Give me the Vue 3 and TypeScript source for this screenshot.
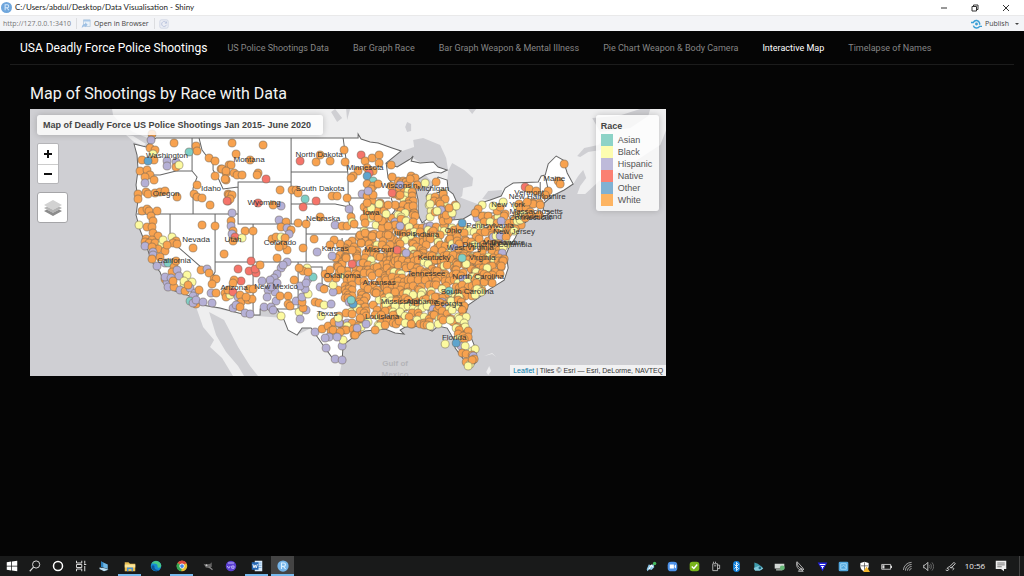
<script setup lang="ts">
type Race = 'A' | 'B' | 'H' | 'N' | 'O' | 'W'

interface Dot {
  x: number
  y: number
  race: Race
}

interface Label {
  name: string
  x: number
  y: number
}

const navItems: string[] = [
  'US Police Shootings Data',
  'Bar Graph Race',
  'Bar Graph Weapon & Mental Illness',
  'Pie Chart Weapon & Body Camera',
  'Interactive Map',
  'Timelapse of Names',
]
const activeItem = 'Interactive Map'

const races: { key: Race; name: string }[] = [
  { key: 'A', name: 'Asian' },
  { key: 'B', name: 'Black' },
  { key: 'H', name: 'Hispanic' },
  { key: 'N', name: 'Native' },
  { key: 'O', name: 'Other' },
  { key: 'W', name: 'White' },
]

// Hand-placed markers: "race x,y" separated by spaces.
const placed = `
W152,134 H151,140 W174,143 W196,146 W197,151 A189,152 W150,148 W155,150 B153,154 W142,160 W154,160 O148,161
H167,161 H167,166 H176,162 W176,167 B179,165 W140,171 W147,170 W150,175 W145,177 W154,180 H145,183
W138,194 W138,199 W146,192 W148,194 W155,193 W160,192 W165,191 W177,197 W197,185 W194,194 W197,197 W202,198 W210,205
W209,158 W215,161 W221,169 W226,173 W229,165 W215,176 W226,180 N228,201 W228,194
W142,211 W147,209 W149,211 W157,211 W151,216 W153,221 B139,225 W147,227 W152,227 W153,233 W158,236 W146,239 W152,240 B172,237 W176,241 W202,225 W215,226
W232,143 W263,145 W236,154 W250,160 W231,165 W222,169 W226,171 W225,179 W234,173 W237,175 W242,175 W258,173 W257,175 N266,179 W280,190
N300,161 W316,162 W320,155 W330,161 W344,150 W345,162 N361,155 W365,161 W372,158 W379,155 W379,163 W367,168 W373,171 N369,173 O367,176 A373,181 W358,171 W353,176 W351,178 W367,184 W373,186 W371,189 W378,184 H362,194 W367,196 W373,195 H368,191
W391,165 W392,177 W391,186 N392,193 H400,185 W400,195
W292,190 W296,190 W298,193 A305,199 N316,201 N303,207 W332,196 W337,196 W347,198 H349,209 W320,217 H335,225 W342,226 W347,226 W351,217 B352,222 W354,224
W229,195 W232,195 W230,199 N227,201 N258,203 W273,205 H281,206 H232,213 W231,221 H231,226 W233,231 H232,234 W245,231 W253,231 N235,237 W233,241 B242,238
H279,220 W286,222 W281,227 H287,228 W291,230 H289,234 W298,223 W306,224 W314,239 W272,239 W276,237 B281,237 W285,238
W364,207 W367,211 W364,218 W365,223 W373,216 B379,204 B371,208 B386,214 W388,205 W382,221 W388,226 W388,235 W360,235 W365,233 W372,236 H400,226 W378,218 W367,203
W145,242 W149,243 W155,243 B162,244 W173,243 W177,244 H145,246 W158,249 W165,251 W152,247 H153,252 H153,255 W152,259 H157,266 H165,263 A168,263 W160,257 B163,240 W167,245 W174,267 W176,261 W172,272 H177,270 H179,276 B187,275 B192,282 B184,284 W165,279 H167,282 H165,277 H168,287 W174,287 H180,290 B184,281 W185,291 H190,288 W188,285 H195,293 W199,290 H193,296 A190,301 W196,304 H193,303 H196,300 H203,302 H212,303 W201,270 H207,269 W209,273 W214,279 W216,279 W212,284 H211,293 W216,293 W193,248 W224,254 H171,278 W173,281
N238,269 N251,261 N249,271 N256,273 N255,269 N241,281 W260,265 W277,258 H287,262 W287,250 W283,245 W279,247 W303,248 H317,252 H332,256 H281,268 H283,265 H277,274 H274,278 H271,283 H270,280 H262,281 H277,283 H275,292 H268,290 H271,287
W234,280 W233,283 W225,293 W226,297 B230,295 W228,290 N233,292 H238,297 W240,295 W241,302 H233,308 H236,305 W240,307 H245,313 H250,314 W248,300 W252,299 W249,289 W253,289 W246,297 H267,297 H276,301 H264,307 H271,307 H273,310 B281,316 W280,296 W288,296 W288,304 W290,306 W294,280 H296,301 B299,312 H300,319 H306,310 W303,308 W302,302 H302,297 B308,294 H305,289 H300,286 H308,279 A313,277 B307,268 W303,271 W308,272 W299,268 H306,283 H320,287 W324,289 H333,292 W315,302 W319,303 B324,305 H331,304 B321,316 B333,285
H315,332 W322,329 W328,326 W331,331 W333,330 H329,337 W334,322 H339,323 W340,332 B338,318 H326,348 H335,359 H342,360 H342,346 B343,340 H337,337 H325,338
W325,274 W330,270 W336,278 W341,270 W346,258 W352,250 W340,244 W334,240 W330,245 W328,278
W410,179 W436,182 B425,183 W443,194 W445,199 W440,204 H441,210 B430,204 B437,211 W446,215 B452,213 B456,206 W449,208
B482,205 W478,209 W475,213 W497,211 W500,207 B503,202 B493,206 N525,187 W529,189 W536,191 W548,191 W539,203 W545,195 W564,164 W558,181 W560,184 W533,204 W527,202 W540,205
N352,264 O353,304 A351,300 O462,223 B466,264 A462,258 O456,343 A449,291 B445,344 H406,253 H357,328 N397,250 W375,330 W411,324 W472,360 B468,366`

const dots: Dot[] = placed
  .trim()
  .split(/\s+/)
  .map((entry) => {
    const [x, y] = entry.slice(1).split(',').map(Number)
    return { x, y, race: entry[0] as Race }
  })

// Seeded generator, so the crowded regions look the same on every load.
let seed = 20157
function random(): number {
  seed = (seed * 16807) % 2147483647
  return seed / 2147483647
}

type Ring = [number, number][]

function inside(px: number, py: number, ring: Ring): boolean {
  let hit = false
  for (let i = 0, j = ring.length - 1; i < ring.length; j = i++) {
    const [xi, yi] = ring[i]
    const [xj, yj] = ring[j]
    if (yi > py !== yj > py && px < ((xj - xi) * (py - yi)) / (yj - yi) + xi) hit = !hit
  }
  return hit
}

function scatter(ring: Ring, step: number, keep: number, black: number, hispanic: number): Dot[] {
  const found: Dot[] = []
  const xs = ring.map((p) => p[0])
  const ys = ring.map((p) => p[1])
  for (let y = Math.min(...ys); y < Math.max(...ys); y += step) {
    for (let x = Math.min(...xs); x < Math.max(...xs); x += step) {
      const px = Math.round(x + random() * step)
      const py = Math.round(y + random() * step)
      const pick = random()
      if (random() > keep || !inside(px, py, ring)) continue
      const race: Race = pick < black ? 'B' : pick < black + hispanic ? 'H' : 'W'
      found.push({ x: px, y: py, race })
    }
  }
  return found
}

const crowded: Dot[] = [
  ...scatter([[394, 172], [418, 176], [416, 196], [418, 212], [404, 212], [392, 202]], 5, 0.8, 0.15, 0.05),
  ...scatter([[370, 200], [396, 206], [392, 234], [360, 234]], 7, 0.5, 0.35, 0.05),
  ...scatter([[392, 204], [418, 206], [421, 224], [456, 222], [452, 262], [395, 256], [388, 232]], 5, 0.85, 0.25, 0.04),
  ...scatter([[426, 196], [444, 188], [458, 204], [450, 222], [426, 222]], 6, 0.75, 0.4, 0.06),
  ...scatter([[336, 258], [350, 238], [365, 232], [392, 234], [398, 262], [392, 302], [348, 302], [338, 290]], 5, 0.8, 0.1, 0.03),
  ...scatter([[448, 228], [470, 221], [488, 211], [505, 212], [525, 215], [532, 218], [516, 230], [508, 244], [506, 258], [450, 266]], 5, 0.82, 0.24, 0.05),
  ...scatter([[513, 202], [544, 202], [545, 212], [532, 220], [508, 222]], 5, 0.7, 0.25, 0.1),
  ...scatter([[393, 254], [450, 254], [508, 258], [504, 277], [486, 290], [468, 302], [448, 308], [386, 308]], 5, 0.92, 0.13, 0.02),
  ...scatter([[343, 298], [362, 298], [374, 302], [378, 320], [362, 332], [350, 338], [332, 328], [330, 320], [346, 312]], 5, 0.85, 0.15, 0.08),
  ...scatter([[376, 290], [468, 296], [466, 318], [440, 327], [406, 327], [374, 326]], 5, 0.85, 0.38, 0.02),
  ...scatter([[488, 262], [508, 258], [508, 268], [498, 282], [476, 298], [466, 300]], 6, 0.6, 0.55, 0.02),
  ...scatter([[448, 320], [464, 318], [470, 334], [478, 350], [476, 366], [466, 364], [456, 346]], 5, 0.9, 0.25, 0.1),
]

const allDots: Dot[] = [...crowded, ...dots]

const labels: Label[] = [
  ['Washington', 167, 155], ['Oregon', 166, 193], ['California', 174, 260], ['Nevada', 196, 239],
  ['Idaho', 211, 188], ['Montana', 249, 159], ['Wyoming', 264, 202], ['Utah', 233, 239],
  ['Colorado', 280, 242], ['Arizona', 234, 287], ['New Mexico', 276, 286], ['North Dakota', 319, 154],
  ['South Dakota', 320, 188], ['Nebraska', 323, 218], ['Kansas', 335, 248], ['Oklahoma', 342, 275],
  ['Texas', 327, 313], ['Minnesota', 365, 167], ['Iowa', 371, 212], ['Missouri', 379, 249],
  ['Arkansas', 379, 282], ['Louisiana', 382, 316], ['Wisconsin', 399, 185], ['Illinois', 405, 233],
  ['Michigan', 433, 188], ['Indiana', 426, 234], ['Ohio', 453, 230], ['Kentucky', 434, 257],
  ['Tennessee', 426, 273], ['Mississippi', 400, 301], ['Alabama', 422, 301], ['Georgia', 448, 303],
  ['Florida', 454, 337], ['South Carolina', 467, 291], ['North Carolina', 478, 276], ['Virginia', 482, 257],
  ['West Virginia', 470, 247], ['Pennsylvania', 490, 225], ['New York', 508, 204], ['New Jersey', 514, 231],
  ['Maryland', 499, 242], ['District of Columbia', 497, 244], ['Delaware', 508, 242], ['Connecticut', 530, 217],
  ['Rhode Island', 538, 216], ['Massachusetts', 536, 211], ['New Hampshire', 537, 196], ['Vermont', 529, 192],
  ['Maine', 554, 178],
].map(([name, x, y]) => ({ name, x, y }) as Label)

const landPaths: string[] = [
  'M112 109L113 115L121 124L133 132L150 139L344 139L400 150L440 190L480 205L541 183L573 184L578 176L583 170L586 178L580 186L577 194L585 194L600 180L612 175L640 158L660 145L666 130V109Z',
  'M126 135L133 136L146 144L143 146L134 142Z',
  'M195 304L210 307L246 315L284 318L297 335L311 328L325 348L342 361L339 376H258L250 366L238 347L224 320L209 312L216 335L226 352L238 366L244 376H233L222 358L210 347L214 340L203 327Z',
  'M484 356L492 353L496 357L493 362L496 357L492 354Z',
  'M489 366L491 371L488 375L486 372Z',
]

const lakePaths: string[] = [
  'M386 163L402 151L414 147L413 140L423 138L440 145L446 158L448 171L440 168L433 163L421 163L411 157L397 167Z',
  'M448 171L452 163L464 170L473 178L472 186L463 188L462 196L455 202L449 190L447 181Z',
  'M452 219L458 210L468 206L480 205L482 208L470 216L460 221Z',
  'M482 199L488 191L502 190L501 196L490 200Z',
  'M335 109L342 118L337 122L331 112ZM346 109L350 109L347 120Z',
  'M407 122L411 124L411 131L407 132L405 127Z',
  'M468 109L476 109L472 114ZM577 156L584 148L598 145L606 137L600 150L588 152L580 157Z',
  'M592 118L618 116L640 109L650 109L648 116L630 128L600 132Z',
]

const usPath =
  'M134 144L146 147L150 142L156 138H344L358 138V134L361 139L370 142L378 143L392 148L401 151L386 163L397 167L410 159L413 156L411 161L420 163L433 162L438 167L447 170L441 173L434 172L425 175L417 180L415 187L418 200L418 215L422 223L428 218L430 207L426 196L432 186L438 177L447 180L448 190L453 194L457 203L451 212L452 220L463 219L475 212L482 207L480 203L490 200L501 196L505 188L513 183L538 182L541 176L545 175L548 164L556 156L563 160L567 173L573 184L564 190L552 196L544 203L543 210L550 212L548 215L530 218L520 227L515 238L509 247L506 254L508 268L504 280L488 290L478 298L468 305L465 315L468 330L476 350L476 362L470 368L464 360L455 348L453 338L447 328L438 326L432 331L422 326L405 327L400 330L404 334L395 333L385 329L365 331L352 338L343 345L342 360L333 359L325 348L318 338L311 328L302 328L297 335L288 330L284 320L277 309H260V315H246L220 308L196 304L190 296L175 291L165 285L160 272L152 262L146 245L140 230L136 215L138 200L136 185L138 170L137 155Z'

const statePath =
  'M152 175L160 175L176 171L192 171V138M192 171L197 177L193 188V214M137 214H238M199 138L202 150L208 158L213 164L213 170L219 180L223 189L238 187M238 182H291V224H238ZM291 138V182M291 172H347M291 204H335L349 207M343 138L346 160L348 175V200L352 212L357 228M291 224H306V262M306 234H358M253 224V315M215 214V272L212 277M170 214V240L209 274M215 262H342M298 262V309M260 309H298M298 267H322V284L333 288L346 291M348 198H390M357 228H386M391 198L395 210L386 222L390 234L398 246L395 258L385 275L378 290V304M342 238V262L346 268V292L352 304H378M346 268H388M540 182V205M545 176L550 198M475 213H505M391 228H418M424 222V250M448 222V240M395 264H500M404 268V325M428 268V320M386 163L388 178L402 196M480 262L506 263'

const pinned: string[] = [
  '<path d="M1 3l6-1v5.5H1zM8 2l7-1v6.500H8zM1 8.500h6V14l-6-1zM8 8.500h7V15l-7-1z" fill="#fff"/>',
  '<circle cx="9.500" cy="6" r="4.800" fill="none" stroke="#ddd" stroke-width="1.300"/><path d="M6 9.500L1 15" stroke="#ddd" stroke-width="1.500"/>',
  '<circle cx="8" cy="8" r="6" fill="none" stroke="#fff" stroke-width="2"/>',
  '<path d="M2 1v3h7V1M2 15v-3h7v3M2 6h7v4H2zM13 1v4M13 8v7M12 6h3" fill="none" stroke="#ddd" stroke-width="1.300"/>',
  '<path d="M4 2l9 4v6l-9-3z" fill="#6fb7e6"/><path d="M2 10l7 1 5 2-6 2-6-3z" fill="#b9dcf1"/><path d="M4 2l3 1v7l-3-1z" fill="#2c80bd"/>',
  '<path d="M1 3h5l2 2h7v10H1z" fill="#e8bd51"/><path d="M1 6h14v4H1z" fill="#fbe59b"/><path d="M4 15v-5h8v5h-2v-3H6v3z" fill="#4a91d0"/>',
  '<circle cx="8" cy="8" r="7" fill="#168bd2"/><path d="M2 5C5-1 14 1 15 7c0 4-5 4-5 2 1-4-4-5-8-4z" fill="#48c987"/><path d="M6 8c-1 4 3 6 7 5-4 4-10 1-11-3 0-3 2-4 4-2z" fill="#0d579b"/>',
  '<circle cx="8" cy="8" r="7" fill="#e8bf35"/><path d="M8 8L2 4a7 7 0 0 1 12 0z" fill="#dc4a3f"/><path d="M8 8L2 4a7 7 0 0 0 5 11z" fill="#35a653"/><circle cx="8" cy="8" r="3.400" fill="#fff"/><circle cx="8" cy="8" r="2.500" fill="#4687e8"/>',
  '<path d="M2 5l4 1 5-1 2-2v6l-3 2-5-1z" fill="#666"/><circle cx="6" cy="7" r="1.300" fill="#ccc"/><path d="M9 9l5 4" stroke="#888" stroke-width="1.500"/>',
  '<circle cx="8" cy="8" r="7" fill="#5b3fd0"/><path d="M4 4h8M3 8l2 3 2-3M9 8h3v3H9z" fill="none" stroke="#bfb5fa" stroke-width="1.300"/>',
  '<path d="M5 1h10v14H5z" fill="#d9eafa"/><path d="M7 4h7M7 7h7M7 10h7" stroke="#62a0dc"/><path d="M1 3h9v10H1z" fill="#2467b4"/><path d="M2.500 5.500L4 10.500l1.500-4 1.500 4 1.500-5" fill="none" stroke="#fff" stroke-width="1.200"/>',
  '<circle cx="8" cy="8" r="7.500" fill="#75b5e9"/><path d="M6 12V4h3a2 2 0 0 1 0 4.500H6M8.500 8.500l3 3.500" fill="none" stroke="#d8efff" stroke-width="1.500"/>',
]
const openApps: number[] = [5, 7, 10, 11]

const tray: string[] = [
  '<path d="M1 12l3-7 4 1 3-2 1 5-4 4-3-1-3 3z" fill="#8fc8e8"/><path d="M4 12l4-6 2 3" stroke="#fff" stroke-width="1.500" fill="none"/><circle cx="12.500" cy="3.500" r="2.500" fill="#42b85c"/>',
  '<rect x="1" y="1" width="14" height="14" rx="5" fill="#4c91e9"/><path d="M4 5h6v6H4zM11 7l2-2v6l-2-2z" fill="#fff"/>',
  '<rect x="1" y="1" width="14" height="14" rx="4" fill="#79b51c"/><path d="M4 8l3 3 5-6" fill="none" stroke="#fff" stroke-width="2"/>',
  '<path d="M4 4h7v10H4zM11 6h3v5h-3M5 1v2M8 1v2M6 7h3" fill="none" stroke="#ccc" stroke-width="1.200"/>',
  '<rect x="3" y="0" width="10" height="16" rx="5" fill="#1683dc"/><path d="M5 5l6 6-3 3V2l3 3-6 6" fill="none" stroke="#fff" stroke-width="1.200"/>',
  '<path d="M2 2l5 2 7 5-2 4H2z" fill="#3f9cad"/><path d="M1 10l8-3 6 4-5 3H3z" fill="#82cadb"/><circle cx="10" cy="10" r="2" fill="#246b85"/>',
  '<path d="M1 4h14v7H1z" fill="#d2d7d4"/><path d="M3 11h9v3H3z" fill="#8e9991"/><circle cx="12" cy="10" r="3.500" fill="#65b877"/>',
  '<path d="M3 1c0 6 3 10 10 11C8 16 0 10 3 1zM4 2l8 9M8 11l4 4H5z" fill="none" stroke="#ccc" stroke-width="1.200"/>',
  '<path d="M1 2h14l-7 13z" fill="#2020df"/><path d="M4 5h8M6 8h4M8 8v3" stroke="#fff" stroke-width="1.500"/>',
  '<rect x="1" y="1" width="14" height="14" rx="2" fill="#51a6dc"/><path d="M4 4h8v8H4zM5 9l3-3 4 4" fill="none" stroke="#a9ddfb" stroke-width="1.300"/>',
  '<path d="M8 1l6 2v5c0 4-3 6-6 7-3-1-6-3-6-7V3z" fill="#fff"/><path d="M8 2v12M3 7h10" stroke="#444"/><path d="M11 8l5 8H6z" fill="#f4b72b"/>',
  '<path d="M1 5h13v7H1z" fill="none" stroke="#ddd" stroke-width="1.200"/><path d="M2 6h3v5H2zM14 7h2v3h-2z" fill="#ddd"/>',
  '<path d="M2 13A12 12 0 0 1 14 2M5 14a9 9 0 0 1 9-9M8 14a6 6 0 0 1 6-6M11 14a3 3 0 0 1 3-3" fill="none" stroke="#bbb" stroke-width="1.200"/>',
  '<path d="M1 6h2l4-4v12l-4-4H1z" fill="none" stroke="#ddd" stroke-width="1.200"/><path d="M9 6q2 2 0 4M11 4q3 4 0 8M13 2q5 6 0 12" fill="none" stroke="#888"/>',
  '<path d="M1 13c4 3 6-2 3-2-4 0 4-3 5-5l4-4 2 2-5 5-3 1M9 10c4-1 5 2 2 3" fill="none" stroke="#ddd" stroke-width="1.300"/>',
]
</script>

<template>
  <div class="window">
    <header class="titlebar">
      <svg class="r-logo" viewBox="0 0 16 16" aria-hidden="true">
        <circle cx="8" cy="8" r="8" fill="#6fa6dc" />
        <path d="M6 12V4h3a2 2 0 0 1 0 4.500H6M8.500 8.500l3 3.500" fill="none" stroke="#d5e8fa" stroke-width="1.500" />
      </svg>
      <span class="window-title">C:/Users/abdul/Desktop/Data Visualisation - Shiny</span>
      <div class="window-buttons">
        <button type="button" aria-label="Minimise">
          <svg viewBox="0 0 8 8"><path d="M1 4h6" /></svg>
        </button>
        <button type="button" aria-label="Restore">
          <svg viewBox="0 0 8 8"><path d="M1 2.500h4.500V7H1zM2.500 2.500V1H7v4.500H5.500" /></svg>
        </button>
        <button type="button" aria-label="Close">
          <svg viewBox="0 0 8 8"><path d="M1 1l6 6M7 1L1 7" /></svg>
        </button>
      </div>
    </header>

    <div class="toolbar">
      <span class="address">http://127.0.0.1:3410</span>
      <button type="button" class="tool open">
        <svg viewBox="0 0 12 12" aria-hidden="true">
          <path d="M3 1h8v8H3z" fill="#e9f1f9" stroke="#b7cbe0" />
          <path d="M3 1h8v2H3z" fill="#a9c8e8" />
          <path d="M1 11c0-4 2-5 4-5V4l3 3-3 3V8c-2 0-3 1-4 3z" fill="#9cbfe4" />
        </svg>
        Open in Browser
      </button>
      <button type="button" class="tool reload" aria-label="Reload">
        <svg viewBox="0 0 12 12">
          <rect x="1" y="1" width="10" height="10" rx="2" fill="#eceef5" stroke="#cdd2e2" />
          <path d="M9 5a3 3 0 1 0 0 2M9 3v2H7" fill="none" stroke="#b5bfda" />
        </svg>
      </button>
      <button type="button" class="tool publish">
        <svg viewBox="0 0 14 12" aria-hidden="true">
          <path d="M0 4h3c2-4 7-3 8 1v2M14 9h-3c-2 3-7 3-8-1" fill="none" stroke="#3a9fd6" stroke-width="1.800" />
          <circle cx="7" cy="6" r="1.800" fill="#3a9fd6" />
        </svg>
        Publish
        <span class="caret"></span>
      </button>
    </div>

    <nav class="navbar">
      <a href="#" class="brand">USA Deadly Force Police Shootings</a>
      <div class="nav-links">
        <a v-for="item in navItems" :key="item" href="#" class="nav-link" :class="{ active: item === activeItem }">{{ item }}</a>
      </div>
    </nav>

    <main class="content">
      <h1>Map of Shootings by Race with Data</h1>
      <section class="map" aria-label="Map of shootings">
        <svg class="map-canvas" viewBox="30 109 636 267" preserveAspectRatio="xMidYMid slice">
          <rect class="ocean" x="30" y="109" width="636" height="267" />
          <path v-for="d in landPaths" :key="d" class="land" :d="d" />
          <path v-for="d in lakePaths" :key="d" class="lake" :d="d" />
          <path class="country" :d="usPath" />
          <path class="states" :d="statePath" />
          <text class="sea" x="395" y="366">Gulf of</text>
          <text class="sea" x="395" y="377">Mexico</text>
          <circle v-for="(dot, i) in allDots" :key="i" class="dot" :class="'race-' + dot.race" :cx="dot.x" :cy="dot.y" r="4" />
          <text v-for="label in labels" :key="label.name" class="state-name" :x="label.x" :y="label.y + 3">{{ label.name }}</text>
        </svg>

        <h2 class="map-title">Map of Deadly Force US Police Shootings Jan 2015- June 2020</h2>
        <div class="zoom">
          <button type="button" aria-label="Zoom in"><svg viewBox="0 0 10 10"><path d="M1 5h8M5 1v8" /></svg></button>
          <button type="button" aria-label="Zoom out"><svg viewBox="0 0 10 10"><path d="M1 5h8" /></svg></button>
        </div>
        <button type="button" class="layers" aria-label="Layers">
          <svg viewBox="0 0 20 20">
            <path d="M1 13l9 5 9-5-3-1.500-6 3-6-3z" fill="#8c8c8c" />
            <path d="M1 10l9 5 9-5-3-1.500-6 3-6-3z" fill="#b4b4b4" />
            <path d="M1 7l9-5 9 5-9 5z" fill="#d2d2d2" />
          </svg>
        </button>
        <div class="legend">
          <strong>Race</strong>
          <ul>
            <li v-for="race in races" :key="race.key"><i :class="'race-' + race.key"></i>{{ race.name }}</li>
          </ul>
        </div>
        <p class="attribution"><a href="#">Leaflet</a> | Tiles © Esri — Esri, DeLorme, NAVTEQ</p>
      </section>
    </main>

    <footer class="taskbar">
      <div class="pinned">
        <button v-for="(icon, i) in pinned" :key="i" type="button" :class="{ open: openApps.includes(i), current: i === 11 }" :aria-label="'App ' + (i + 1)">
          <svg viewBox="0 0 16 16" v-html="icon"></svg>
        </button>
      </div>
      <div class="tray">
        <button v-for="(icon, i) in tray" :key="i" type="button" :aria-label="'Status ' + (i + 1)">
          <svg viewBox="0 0 16 16" v-html="icon"></svg>
        </button>
      </div>
      <time class="clock">10:56</time>
      <button type="button" class="notices" aria-label="Notifications">
        <svg viewBox="0 0 16 16">
          <path d="M1 1h14v11h-3v3l-4-3H1z" fill="#eee" />
          <path d="M3 4h10M3 6.500h10M3 9h6" stroke="#555" />
        </svg>
      </button>
      <span class="desktop-edge"></span>
    </footer>
  </div>
</template>

<style>
body {
  margin: 0;
  background: #050505;
}
</style>

<style scoped>
.window {
  display: flex;
  flex-direction: column;
  min-height: 100vh;
  background: #050505;
  font-family: Roboto, "Liberation Sans", sans-serif;
}
button {
  margin: 0;
  padding: 0;
  border: 0;
  background: none;
  font: inherit;
  color: inherit;
}
svg {
  display: block;
}
a {
  text-decoration: none;
}
.titlebar {
  display: flex;
  align-items: center;
  height: 15px;
  padding-left: 1px;
  background: #fff;
  border-bottom: 1px solid #e9e9ea;
}
.r-logo {
  width: 11px;
  height: 11px;
}
.window-title {
  margin-left: 3px;
  font: 8px/15px Lato, "Open Sans", sans-serif;
  color: #222;
}
.window-buttons {
  display: flex;
  gap: 23px;
  margin-left: auto;
  padding-right: 14px;
}
.window-buttons svg {
  width: 8px;
  height: 8px;
  fill: none;
  stroke: #333;
  stroke-width: 1;
}
.toolbar {
  display: flex;
  align-items: center;
  height: 15px;
  padding: 0 5px 0 3px;
  background: #f3f4f7;
  font: 7px/15px "Open Sans", "Noto Sans", sans-serif;
  color: #444;
}
.address {
  color: #777;
}
.tool {
  display: flex;
  align-items: center;
  gap: 3px;
  height: 11px;
}
.tool svg {
  width: 10px;
  height: 10px;
}
.open.tool,
.reload {
  margin-left: 5px;
  padding-left: 4px;
  border-left: 1px solid #dcdde0;
}
.publish {
  margin-left: auto;
}
.publish svg {
  width: 11px;
}
.caret {
  margin-left: 3px;
  border: 2px solid transparent;
  border-top-color: #444;
  border-bottom: 0;
}
.navbar {
  display: flex;
  align-items: center;
  gap: 20px;
  height: 33px;
  margin: 0 10px;
  padding: 0 10px;
  border-bottom: 1px solid #1c1c1c;
  white-space: nowrap;
}
.brand {
  font-size: 12px;
  color: #fff;
}
.nav-links {
  display: flex;
  gap: 24px;
}
.nav-link {
  font-size: 9px;
  color: #858585;
}
.nav-link.active {
  color: #fff;
}
.content {
  flex: 1;
  padding: 19px 30px 20px;
}
h1 {
  margin: 0 0 5px;
  font-size: 16px;
  font-weight: 400;
  line-height: 20px;
  color: #f4f4f4;
}
.map {
  position: relative;
  width: 66%;
  aspect-ratio: 636 / 267;
  overflow: hidden;
  font-family: "Liberation Sans", Arial, sans-serif;
}
.map-canvas {
  width: 100%;
  height: 100%;
}
.ocean,
.lake {
  fill: #cfcfd3;
}
.land {
  fill: #eeeeef;
}
.country {
  fill: #fff;
  stroke: #666;
  stroke-width: 1;
}
.states {
  fill: none;
  stroke: #666;
  stroke-width: 1;
}
.sea {
  font-size: 8px;
  font-weight: 700;
  fill: #b4b4b8;
  text-anchor: middle;
}
.dot {
  stroke: #6d6252;
  stroke-opacity: 0.5;
  stroke-width: 1;
}
.race-A {
  fill: #7fcfc6;
  background: #8dd3c7;
}
.race-B {
  fill: #fcfaa0;
  background: #fdfdb0;
}
.race-H {
  fill: #b5b0d6;
  background: #bebada;
}
.race-N {
  fill: #f5746a;
  background: #fb8072;
}
.race-O {
  fill: #5fa4cd;
  background: #80b1d3;
}
.race-W {
  fill: #f8a24f;
  background: #fdb462;
}
.state-name {
  font-size: 8px;
  fill: #333;
  text-anchor: middle;
}
.map-title,
.legend {
  position: absolute;
  top: 6px;
  margin: 0;
  background: rgba(255, 255, 255, 0.8);
  border-radius: 3px;
  box-shadow: 0 0 6px rgba(0, 0, 0, 0.2);
  color: #555;
}
.map-title {
  left: 7px;
  padding: 0 12px 0 6px;
  font-size: 9px;
  line-height: 20px;
  color: #444;
}
.zoom {
  position: absolute;
  top: 34px;
  left: 7px;
  border: 1px solid #b5b5b8;
  border-radius: 2px;
  background: #fff;
}
.zoom button {
  display: grid;
  place-items: center;
  width: 20px;
  height: 20px;
}
.zoom button + button {
  height: 19px;
  border-top: 1px solid #ccc;
}
.zoom svg {
  width: 10px;
  height: 10px;
  stroke: #111;
  stroke-width: 2;
}
.layers {
  position: absolute;
  top: 83px;
  left: 7px;
  display: grid;
  place-items: center;
  width: 31px;
  height: 31px;
  border: 1px solid #a5a5a8;
  border-radius: 3px;
  background: #fff;
}
.layers svg {
  width: 20px;
  height: 20px;
}
.legend {
  right: 7px;
  padding: 5px 7px 5px 5px;
  font-size: 9px;
  line-height: 12px;
}
.legend strong {
  color: #444;
}
.legend ul {
  margin: 2px 0 0;
  padding: 0;
  list-style: none;
}
.legend li {
  display: flex;
  gap: 5px;
}
.legend i {
  width: 12px;
  height: 12px;
}
.attribution {
  position: absolute;
  right: 0;
  bottom: 0;
  margin: 0;
  padding: 0 3px;
  font-size: 7px;
  line-height: 11px;
  color: #333;
  background: rgba(255, 255, 255, 0.7);
}
.attribution a {
  color: #0078a8;
}
.taskbar {
  display: flex;
  align-items: stretch;
  height: 20px;
  background: #191a1a;
  color: #eee;
}
.pinned,
.tray {
  display: flex;
}
.pinned {
  flex: 0 0 294px;
}
.tray {
  flex: 0 0 320px;
  margin-left: auto;
}
.pinned button,
.tray button,
.notices {
  display: grid;
  place-items: center;
  flex: 1;
}
.pinned .open {
  margin: 0 3px;
  border-bottom: 2px solid #76b9ed;
  padding-top: 2px;
}
.pinned .current {
  margin: 0;
  background: #444;
}
.taskbar svg {
  width: 12px;
  height: 12px;
}
.tray svg {
  width: 11px;
  height: 11px;
}
.clock {
  width: 28px;
  font: 8px/20px "Open Sans", "Noto Sans", sans-serif;
  text-align: center;
}
.notices {
  flex: 0 0 24px;
}
.desktop-edge {
  width: 4px;
  margin-left: 6px;
  border-left: 1px solid #444;
}
</style>
